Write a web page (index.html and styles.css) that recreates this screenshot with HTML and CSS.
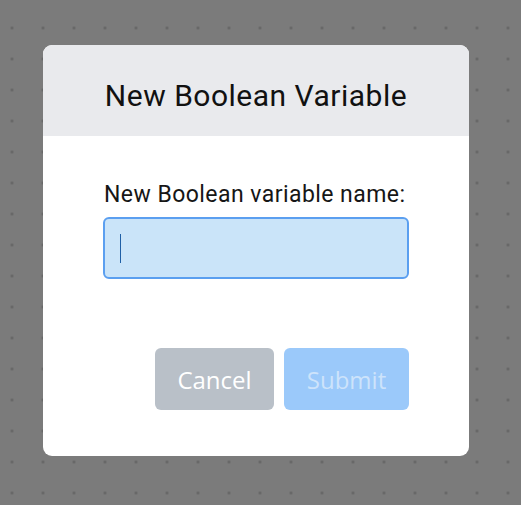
FILE: index.html
```html
<!DOCTYPE html>
<html>
<head>
<meta charset="utf-8">
<link rel="stylesheet" href="styles.css">
</head>
<body>
<div class="stage">
  <div class="dialog">
    <div class="dialog-header">
      <h1 class="dialog-title">New Boolean Variable</h1>
    </div>
    <div class="dialog-body">
      <label class="field-label">New Boolean variable name:</label>
      <div class="field-input"><span class="caret"></span></div>
      <div class="actions">
        <button class="btn btn-cancel">Cancel</button>
        <button class="btn btn-submit">Submit</button>
      </div>
    </div>
  </div>
</div>
</body>
</html>
```
FILE: styles.css
```css
html, body {
  margin: 0;
  padding: 0;
}
body {
  width: 521px;
  height: 505px;
  overflow: hidden;
  background-color: #7b7b7b;
  background-image: radial-gradient(circle, #666666 1px, rgba(102,102,102,0) 2px);
  background-size: 31px 31px;
  background-position: -3.5px 12.5px;
  font-family: Roboto, "Liberation Sans", sans-serif;
}
.stage {
  padding: 45px 0 0 43px;
}
.dialog {
  width: 426px;
  height: 411px;
  background: #ffffff;
  border-radius: 9px;
  overflow: hidden;
  display: flex;
  flex-direction: column;
}
.dialog-header {
  height: 91px;
  background: #e9eaed;
  display: flex;
  align-items: center;
  justify-content: center;
}
.dialog-title {
  margin: 9px 0 0 0;
  font-size: 30px;
  letter-spacing: 0.5px;
  font-weight: 400;
  color: #111111;
}
.dialog-body {
  padding: 45px 60px 0 60px;
  display: flex;
  flex-direction: column;
}
.field-label {
  font-size: 23px;
  letter-spacing: 0.45px;
  line-height: 28px;
  color: #161616;
  margin-left: 1px;
}
.field-input {
  margin-top: 8px;
  height: 58px;
  border: 2px solid #5b9ff0;
  border-radius: 6px;
  background: #cae4f9;
  display: flex;
  align-items: center;
  padding-left: 15px;
}
.caret {
  width: 1px;
  height: 29px;
  background: #1f5fa6;
}
.actions {
  margin-top: 69px;
  display: flex;
  justify-content: flex-end;
  gap: 10px;
}
.btn {
  height: 62px;
  border: none;
  border-radius: 6px;
  font-family: "Open Sans", sans-serif;
  font-size: 24px;
  padding: 0;
}
.btn-cancel {
  width: 119px;
  background: #b9c0c8;
  color: #ffffff;
}
.btn-submit {
  width: 125px;
  background: #9bc9fa;
  color: #cde3fb;
}
```
